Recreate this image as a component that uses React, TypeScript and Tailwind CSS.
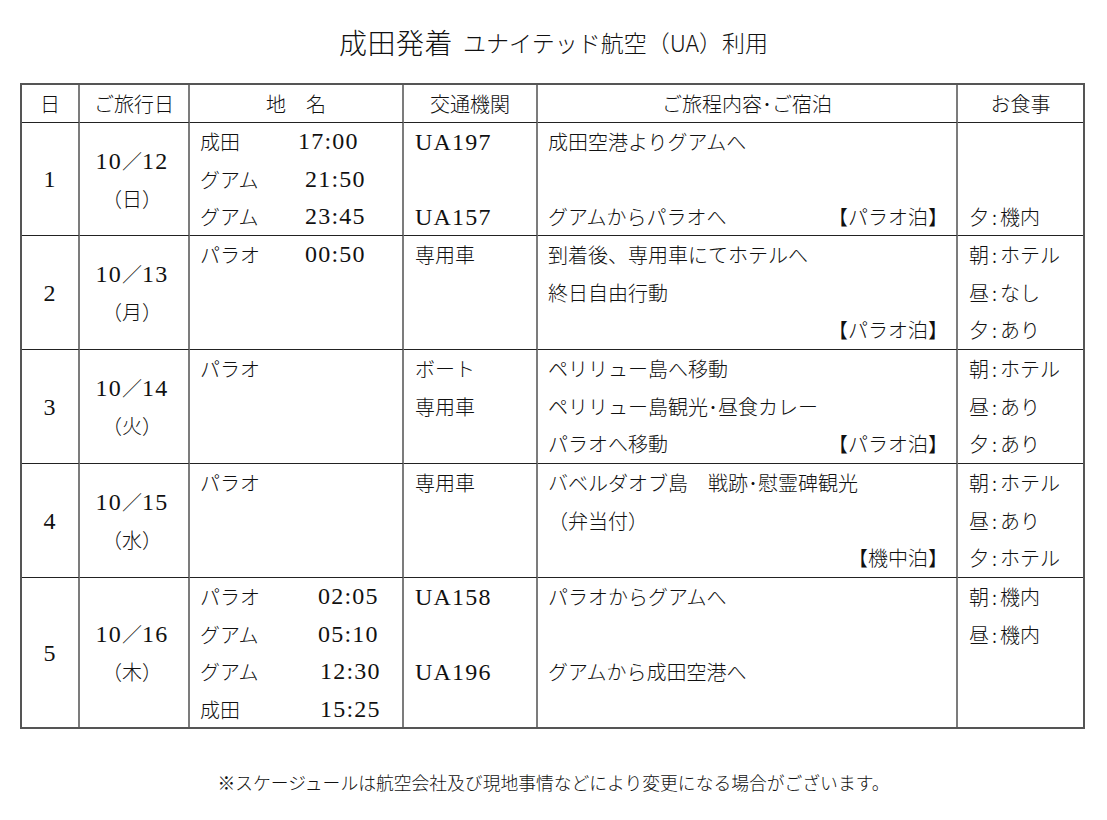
import React from 'react';

const jp = "font-['Noto_Sans_CJK_JP',sans-serif]";
const serif = "font-['Liberation_Serif','Noto_Sans_CJK_JP',serif] text-[24px] font-normal tracking-[1.2px]";

interface Place {
  name: string;
  time?: string;
  w?: string;
}

interface Line {
  l?: string;
  r?: string;
}

interface DayRow {
  day: string;
  date: string;
  week: string;
  places: Place[];
  transport: string[];
  lines: Line[];
  meals: string[];
}

const rows: DayRow[] = [
  {
    day: '1',
    date: '12',
    week: '日',
    places: [
      { name: '成田', time: '17:00', w: 'w-[98px]' },
      { name: 'グアム', time: '21:50', w: 'w-[105px]' },
      { name: 'グアム', time: '23:45', w: 'w-[105px]' },
    ],
    transport: ['UA197', '', 'UA157'],
    lines: [{ l: '成田空港よりグアムへ' }, {}, { l: 'グアムからパラオへ', r: '【パラオ泊】' }],
    meals: ['', '', '夕:機内'],
  },
  {
    day: '2',
    date: '13',
    week: '月',
    places: [{ name: 'パラオ', time: '00:50', w: 'w-[105px]' }],
    transport: ['専用車'],
    lines: [{ l: '到着後、専用車にてホテルへ' }, { l: '終日自由行動' }, { r: '【パラオ泊】' }],
    meals: ['朝:ホテル', '昼:なし', '夕:あり'],
  },
  {
    day: '3',
    date: '14',
    week: '火',
    places: [{ name: 'パラオ' }],
    transport: ['ボート', '専用車'],
    lines: [
      { l: 'ペリリュー島へ移動' },
      { l: 'ペリリュー島観光･昼食カレー' },
      { l: 'パラオへ移動', r: '【パラオ泊】' },
    ],
    meals: ['朝:ホテル', '昼:あり', '夕:あり'],
  },
  {
    day: '4',
    date: '15',
    week: '水',
    places: [{ name: 'パラオ' }],
    transport: ['専用車'],
    lines: [{ l: 'バベルダオブ島　戦跡･慰霊碑観光' }, { l: '（弁当付）' }, { r: '【機中泊】' }],
    meals: ['朝:ホテル', '昼:あり', '夕:ホテル'],
  },
  {
    day: '5',
    date: '16',
    week: '木',
    places: [
      { name: 'パラオ', time: '02:05', w: 'w-[118px]' },
      { name: 'グアム', time: '05:10', w: 'w-[118px]' },
      { name: 'グアム', time: '12:30', w: 'w-[120px]' },
      { name: '成田', time: '15:25', w: 'w-[120px]' },
    ],
    transport: ['UA158', '', 'UA196', ''],
    lines: [{ l: 'パラオからグアムへ' }, {}, { l: 'グアムから成田空港へ' }],
    meals: ['朝:機内', '昼:機内'],
  },
];

const isLatin = (s: string) => /^[A-Z0-9]+$/.test(s);

function Meal({ text }: { text: string }) {
  if (!text) return <div className="h-[37.7px]" />;
  const [a, b] = text.split(':');
  return (
    <div className="h-[37.7px] leading-[37.7px] whitespace-nowrap">
      {a}
      <span className="px-[3px]">:</span>
      {b}
    </div>
  );
}

export default function App() {
  const headers = ['日', 'ご旅行日', '地　名', '交通機関', 'ご旅程内容･ご宿泊', 'お食事'];
  const vr = 'border-r-2 border-r-[#7c7c7c]';

  return (
    <div className={`w-[1107px] h-[820px] bg-white text-[#111] font-light ${jp}`}>
      <div className="pt-[22px] h-[62px] flex items-center justify-center leading-[40px]">
        <span className="text-[28px] tracking-[0.5px]">成田発着</span>
        <span className="text-[23px] ml-[10px]">ユナイテッド航空（UA）利用</span>
      </div>

      <div className="mt-[21px] ml-[20px] w-[1065px] border-2 border-[#555] grid grid-cols-[58px_110px_214px_134px_420px_125px] grid-rows-[38px_113px_114px_114px_114px_149px] text-[20px]">
        {headers.map((h, i) => (
          <div
            key={h}
            className={`flex items-center justify-center border-b border-b-[#222] ${i < 5 ? vr : ''}`}
          >
            {h}
          </div>
        ))}

        {rows.map((row, ri) => {
          const hb = ri < rows.length - 1 ? 'border-b border-b-[#222]' : '';
          return (
            <React.Fragment key={row.day}>
              <div className={`flex items-center justify-center ${hb} ${vr}`}>
                <span className={serif}>{row.day}</span>
              </div>

              <div className={`flex flex-col items-center justify-center pr-[4px] ${hb} ${vr}`}>
                <div className="leading-[37px] whitespace-nowrap">
                  <span className={serif}>10</span>／<span className={serif}>{row.date}</span>
                </div>
                <div className="leading-[37px]">（{row.week}）</div>
              </div>

              <div className={`pl-[10px] ${hb} ${vr}`}>
                {row.places.map((p, pi) => (
                  <div key={pi} className="h-[37.7px] leading-[37.7px] flex whitespace-nowrap">
                    <span className={p.w ?? ''}>{p.name}</span>
                    {p.time && <span className={serif}>{p.time}</span>}
                  </div>
                ))}
              </div>

              <div className={`pl-[11px] ${hb} ${vr}`}>
                {row.transport.map((t, ti) => (
                  <div key={ti} className="h-[37.7px] leading-[37.7px] whitespace-nowrap">
                    {t && (isLatin(t) ? <span className={serif}>{t}</span> : t)}
                  </div>
                ))}
              </div>

              <div className={`pl-[10px] pr-[8px] ${hb} ${vr}`}>
                {row.lines.map((ln, li) => (
                  <div key={li} className="h-[37.7px] leading-[37.7px] flex justify-between whitespace-nowrap">
                    <span>{ln.l ?? ''}</span>
                    <span>{ln.r ?? ''}</span>
                  </div>
                ))}
              </div>

              <div className={`pl-[11px] ${hb}`}>
                {row.meals.map((m, mi) => (
                  <Meal key={mi} text={m} />
                ))}
              </div>
            </React.Fragment>
          );
        })}
      </div>

      <div className="mt-[41px] text-center text-[17.8px] leading-[24px]">
        ※スケージュールは航空会社及び現地事情などにより変更になる場合がございます。
      </div>
    </div>
  );
}
